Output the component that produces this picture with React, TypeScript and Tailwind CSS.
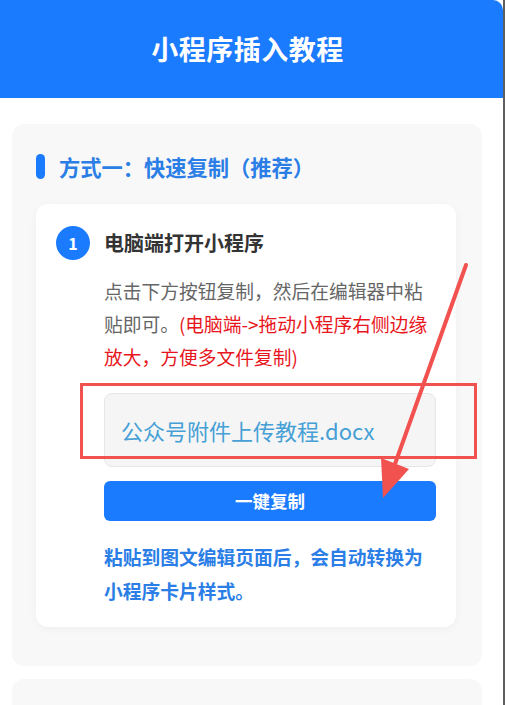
const CJK = "font-['Noto_Sans_CJK_SC','Noto_Sans',sans-serif]";

function Arrow() {
  // red annotation arrow drawn over the page
  return (
    <svg
      className="absolute left-0 top-0 pointer-events-none"
      width={506}
      height={705}
      viewBox="0 0 506 705"
    >
      <line x1={466} y1={265} x2={395} y2={464} stroke="#f2524f" strokeWidth={4} strokeLinecap="round" />
      <polygon points="383,498 381,458 409,469" fill="#f2524f" />
    </svg>
  );
}

export default function App() {
  return (
    <div className={`relative w-[506px] h-[705px] bg-white overflow-hidden ${CJK}`}>
      <div className="w-[505px] h-full border-r-2 border-[#5f5f5f] flex flex-col">
        <header className="h-[98px] shrink-0 bg-[#1b7bff] rounded-tr-[10px] flex items-center justify-center">
          <h1 className="text-white text-[27px] font-bold tracking-[0.5px] -ml-[8px]">小程序插入教程</h1>
        </header>

        <main className="px-3 pt-[26px] flex flex-col gap-[13px]">
          <section className="w-[470px] h-[542px] rounded-xl bg-[#f8f8f8] px-6 pt-[30px]">
            <div className="flex items-center gap-[14px] h-[25px]">
              <span className="w-[9px] h-[25px] rounded-full bg-[#1b7bff]" />
              <h2 className="text-[21.25px] font-bold text-[#2a7ee6] leading-none">方式一：快速复制（推荐）</h2>
            </div>

            <div className="mt-[25px] w-[420px] rounded-xl bg-white shadow-[0_2px_10px_rgba(0,0,0,0.04)] pl-5 pr-5 pt-[22px] pb-[19px]">
              <div className="flex items-center gap-[14px]">
                <span className="w-[34px] h-[34px] rounded-full bg-[#1b7bff] text-white text-[16px] font-bold flex items-center justify-center">1</span>
                <span className="text-[20px] font-bold text-[#333]">电脑端打开小程序</span>
              </div>

              <div className="ml-[48px] w-[332px]">
                <p className="mt-[14px] text-[18.75px] leading-[33px] text-[#666]">
                  点击下方按钮复制，然后在编辑器中粘贴即可。
                  <span className="text-[#e8161c]">(电脑端-&gt;拖动小程序右侧边缘放大，方便多文件复制)</span>
                </p>

                <div className="mt-[20px] h-[74px] rounded-lg bg-[#f5f5f5] border border-[#e6e6e6] flex items-center pl-4">
                  <span className="text-[22px] text-[#45a0d6]">公众号附件上传教程.docx</span>
                </div>

                <button className="mt-[14px] w-full h-[40px] rounded-md bg-[#1b7bff] text-white text-[17.5px] font-bold">
                  一键复制
                </button>

                <p className="mt-[19px] text-[18.75px] leading-[34px] font-bold text-[#2a7ee6]">
                  粘贴到图文编辑页面后，会自动转换为小程序卡片样式。
                </p>
              </div>
            </div>
          </section>

          <section className="w-[470px] h-[60px] rounded-xl bg-[#f8f8f8]" />
        </main>
      </div>

      <div className="absolute left-[80px] top-[383px] w-[397px] h-[76px] border-[3px] border-[#f2524f] pointer-events-none" />
      <Arrow />
    </div>
  );
}
